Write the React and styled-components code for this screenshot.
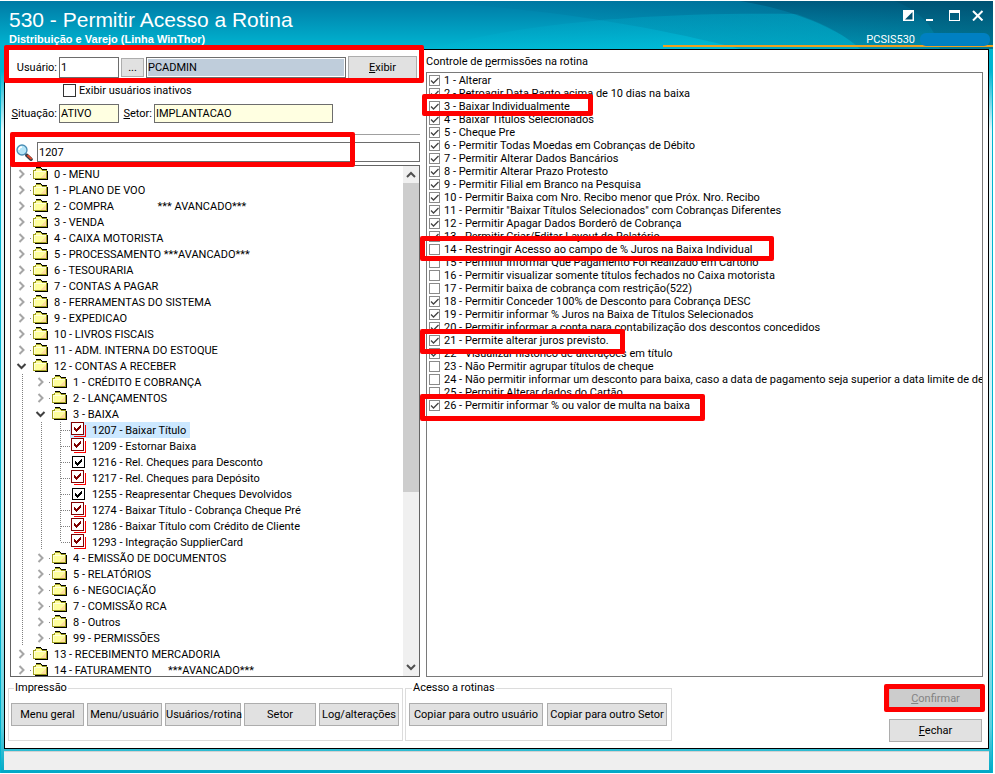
import React, { memo, useState } from 'react';
import styled, { createGlobalStyle, css } from 'styled-components';

const GlobalStyle = createGlobalStyle`
  * {
    box-sizing: border-box;
  }

  body {
    margin: 0;
    background: #fff;
    color: #000;
    font: 11px/13px Roboto, "Noto Sans", sans-serif;
  }

  button, input {
    font: inherit;
    color: inherit;
  }
`;

const Window = styled.div`
  display: flex;
  flex-direction: column;
  height: 100vh;
  border: solid #fff;
  border-width: 1px 2px 1px 0;
  background: linear-gradient(#00b4d0 70px, #e8f8fb 130px, #c8f0f6 70%, #5fd0de 94%, #00a8c6);
  box-shadow: inset 1px 0 #00b4d0, inset -1px 0 #00b4d0;
`;

const Header = styled.header`
  position: relative;
  display: flex;
  justify-content: space-between;
  flex: none;
  height: 48px;
  padding: 0 3px 0 9px;
  color: #fff;
  background: linear-gradient(#007aa5, #00b7d3);
`;

const Swoosh = styled.svg`
  position: absolute;
  inset: 0;
  width: 100%;
  height: 100%;
`;

const Titles = styled.div`
  position: relative;
  padding-top: 7px;
  font-family: "Liberation Sans", sans-serif;
`;

const Title = styled.h1`
  margin: 0;
  font-size: 21px;
  font-weight: normal;
  line-height: 24px;
`;

const Subtitle = styled.div`
  font-weight: bold;
  line-height: 14px;
`;

const HeaderSide = styled.div`
  position: relative;
  display: flex;
  flex-direction: column;
  align-items: flex-end;
`;

const WindowButtons = styled.div`
  display: flex;
  gap: 11px;
  height: 32px;
  padding: 8px 6px 0 0;
`;

const WindowButton = styled.button`
  width: 12px;
  height: 12px;
  padding: 0;
  border: 0;
  background: none;

  svg {
    display: block;
  }
`;

const ScreenCode = styled.div`
  display: flex;
  gap: 5px;
  line-height: 13px;
`;

const Blot = styled.span`
  width: 70px;
  height: 13px;
  border-radius: 6px;
  background: #0080c2;
`;

const Panel = styled.main`
  display: flex;
  flex-direction: column;
  flex: 1;
  min-height: 0;
  margin: 0 4px;
  border: 1px solid #000;
  background: #fff;
`;

const Columns = styled.div`
  display: grid;
  grid-template-columns: 410px minmax(0, 1fr);
  gap: 6px;
  flex: 1;
  min-height: 0;
  padding: 6px 5px 0;
`;

const Column = styled.section`
  display: flex;
  flex-direction: column;
  min-height: 0;
`;

const UserRow = styled.div`
  position: relative;
  display: flex;
  align-items: center;
  gap: 2px;
  height: 23px;
`;

const UserLabel = styled.label`
  width: 47px;
  text-align: right;
`;

const TextInput = styled.input`
  width: ${props => props.$width}px;
  height: ${props => props.$short ? 19 : 21}px;
  padding: 0 3px 0 1px;
  border: 1px solid #6d6d6d;
  border-radius: 0;
  background: #fff;
  outline: 0;

  &:read-only {
    background: #ffffe1;
  }
`;

const UserName = styled(TextInput)`
  &:read-only {
    background: #bfcddb;
    box-shadow: inset 0 0 0 1px #fff;
  }
`;

const Button = styled.button`
  position: relative;
  flex: none;
  width: ${props => props.$width}px;
  height: ${props => props.$small ? 19 : 23}px;
  padding: 0;
  border: 1px solid #adadad;
  background: #e1e1e1;
  white-space: nowrap;

  &:disabled {
    border-color: #bfbfbf;
    background: #ccc;
    color: #838383;
  }
`;

const Highlight = styled.span`
  position: absolute;
  z-index: 1;
  top: ${props => props.$top}px;
  left: ${props => props.$left}px;
  width: ${props => props.$width}px;
  height: ${props => props.$height}px;
  border: 5px solid #f00;
  border-radius: 2px;
  pointer-events: none;
`;

const CheckLabel = styled.label`
  display: flex;
  align-items: center;
  gap: 3px;
  height: 13px;
  margin: 5px 0 7px 53px;
`;

const checkSize = css`
  flex: none;
  width: ${props => props.$size}px;
  height: ${props => props.$size}px;
`;

const CheckBox = styled.span`
  display: grid;
  ${checkSize}

  > * {
    grid-area: 1 / 1;
  }

  svg {
    pointer-events: none;
  }
`;

const CheckInput = styled.input`
  ${checkSize}
  appearance: none;
  margin: 0;
  border: 1px solid ${props => props.$dark ? '#333' : '#8a8a8a'};
  background: #fff;

  &:not(:checked) + svg {
    display: none;
  }
`;

const StatusRow = styled.div`
  display: flex;
  align-items: center;
  gap: 2px;
  height: 19px;
`;

const FieldLabel = styled.label`
  width: ${props => props.$width}px;
  text-align: right;
`;

const Divider = styled.hr`
  width: 100%;
  height: 1px;
  margin: 11px 0 7px;
  border: 0;
  background: #a0a0a0;
`;

const SearchRow = styled.div`
  position: relative;
  display: flex;
  align-items: center;
  gap: 4px;
  height: 20px;
  padding-left: 6px;
  margin-bottom: 3px;
`;

const SearchInput = styled(TextInput)`
  flex: 1;
  height: 20px;
`;

const TreeBox = styled.div`
  display: flex;
  flex: 1;
  min-height: 0;
  border: 1px solid #646464;
  overflow: hidden;
`;

const Tree = styled.ul`
  flex: 1;
  margin: 0;
  padding: 0 0 0 2px;
  list-style: none;
`;

const TreeRow = styled.li`
  display: flex;
  height: 16px;
  white-space: pre;
`;

const guideLine = css`
  background-image: repeating-linear-gradient(#808080 0 1px, transparent 1px 2px);
  background-position: 9px 0;
  background-size: 1px 100%;
  background-repeat: no-repeat;
`;

const Guide = styled.span`
  flex: none;
  width: 19px;
  ${guideLine}
`;

const Elbow = styled.span`
  position: relative;
  flex: none;
  width: 19px;
  ${guideLine}
  ${props => props.$last && 'background-size: 1px 8px;'}

  &::after {
    content: "";
    position: absolute;
    top: 8px;
    right: 0;
    width: 9px;
    height: 1px;
    background: repeating-linear-gradient(90deg, #808080 0 1px, transparent 1px 2px);
  }
`;

const Toggle = styled.button`
  flex: none;
  width: 19px;
  padding: 0;
  border: 0;
  background: none;

  svg {
    display: block;
  }
`;

const TreeItem = styled.span`
  display: flex;
  align-items: center;
  gap: 5px;
  padding: 0 4px 0 1px;
  background: ${props => props.$selected ? '#cce8ff' : 'none'};
`;

const ScrollBar = styled.div`
  display: flex;
  flex-direction: column;
  width: 16px;
  background: #f0f0f0;
`;

const ScrollButton = styled.button`
  flex: none;
  height: 17px;
  padding: 0;
  border: 0;
  background: none;
`;

const ScrollTrack = styled.div`
  flex: 1;
`;

const ScrollThumb = styled.div`
  height: 65%;
  background: #cdcdcd;
`;

const ListTitle = styled.h2`
  margin: 0 0 4px;
  font-size: 11px;
  font-weight: normal;
  line-height: 12px;
`;

const PermissionList = styled.ul`
  flex: 1;
  margin: 0;
  padding: 1px 0 0;
  border: 1px solid #7a7a7a;
  list-style: none;
`;

const PermissionRow = styled.li`
  position: relative;
`;

const PermissionLabel = styled.label`
  display: flex;
  align-items: center;
  gap: 4px;
  height: 13px;
  padding-left: 2px;
  overflow: hidden;
  white-space: nowrap;
`;

const Footer = styled.footer`
  display: flex;
  flex: none;
  gap: 2px;
  padding: 4px 6px 6px 3px;
`;

const Group = styled.fieldset`
  display: flex;
  gap: ${props => props.$gap}px;
  min-width: 0;
  height: 60px;
  margin: 0;
  padding: 8px ${props => props.$gap}px 0 ${props => props.$gap - 1}px;
  border: 1px solid #dcdcdc;

  legend {
    margin-left: 3px;
    padding: 0 1px;
    line-height: 14px;
  }
`;

const Actions = styled.div`
  display: flex;
  flex-direction: column;
  gap: 9px;
  margin-left: auto;
  padding-top: 6px;
`;

const StatusBar = styled.div`
  flex: none;
  height: 19px;
  margin: 2px 4px 3px;
  border-top: 1px solid #d2d2d2;
  background: #efefef;
`;

const FOLDERS = [
  { id: 0, text: '0 - MENU' },
  { id: 1, text: '1 - PLANO DE VOO' },
  { id: 2, text: '2 - COMPRA                *** AVANCADO***' },
  { id: 3, text: '3 - VENDA' },
  { id: 4, text: '4 - CAIXA MOTORISTA' },
  { id: 5, text: '5 - PROCESSAMENTO ***AVANCADO***' },
  { id: 6, text: '6 - TESOURARIA' },
  { id: 7, text: '7 - CONTAS A PAGAR' },
  { id: 8, text: '8 - FERRAMENTAS DO SISTEMA' },
  { id: 9, text: '9 - EXPEDICAO' },
  { id: 10, text: '10 - LIVROS FISCAIS' },
  { id: 11, text: '11 - ADM. INTERNA DO ESTOQUE' },
  {
    id: 12,
    text: '12 - CONTAS A RECEBER',
    children: [
      { id: 121, text: '1 - CRÉDITO E COBRANÇA' },
      { id: 122, text: '2 - LANÇAMENTOS' },
      {
        id: 123,
        text: '3 - BAIXA',
        children: [
          { id: 1207, text: '1207 - Baixar Título', leaf: 'multi' },
          { id: 1209, text: '1209 - Estornar Baixa', leaf: 'multi' },
          { id: 1216, text: '1216 - Rel. Cheques para Desconto', leaf: 'single' },
          { id: 1217, text: '1217 - Rel. Cheques para Depósito', leaf: 'multi' },
          { id: 1255, text: '1255 - Reapresentar Cheques Devolvidos', leaf: 'single' },
          { id: 1274, text: '1274 - Baixar Título - Cobrança Cheque Pré', leaf: 'multi' },
          { id: 1286, text: '1286 - Baixar Título com Crédito de Cliente', leaf: 'multi' },
          { id: 1293, text: '1293 - Integração SupplierCard', leaf: 'multi' },
        ],
      },
      { id: 124, text: '4 - EMISSÃO DE DOCUMENTOS' },
      { id: 125, text: '5 - RELATÓRIOS' },
      { id: 126, text: '6 - NEGOCIAÇÃO' },
      { id: 127, text: '7 - COMISSÃO RCA' },
      { id: 128, text: '8 - Outros' },
      { id: 129, text: '99 - PERMISSÕES' },
    ],
  },
  { id: 13, text: '13 - RECEBIMENTO MERCADORIA' },
  { id: 14, text: '14 - FATURAMENTO      ***AVANCADO***' },
];

const PERMISSIONS = [
  ['Alterar', true],
  ['Retroagir Data Pagto acima de 10 dias na baixa', true],
  ['Baixar Individualmente', true, { $top: -6, $left: -5, $width: 171, $height: 22 }],
  ['Baixar Títulos Selecionados', true],
  ['Cheque Pre', true],
  ['Permitir Todas Moedas em Cobranças de Débito', true],
  ['Permitir Alterar Dados Bancários', true],
  ['Permitir Alterar Prazo Protesto', true],
  ['Permitir Filial em Branco na Pesquisa', true],
  ['Permitir Baixa com Nro. Recibo menor que Próx. Nro. Recibo', true],
  ['Permitir "Baixar Títulos Selecionados" com Cobranças Diferentes', true],
  ['Permitir Apagar Dados Borderô de Cobrança', true],
  ['Permitir Criar/Editar Layout do Relatório', true],
  ['Restringir Acesso ao campo de % Juros na Baixa Individual', false, { $top: -7, $left: -7, $width: 354, $height: 25 }],
  ['Permitir Informar Que Pagamento Foi Realizado em Cartório', false],
  ['Permitir visualizar somente títulos fechados no Caixa motorista', false],
  ['Permitir baixa de cobrança com restrição(522)', false],
  ['Permitir Conceder 100% de Desconto para Cobrança DESC', true],
  ['Permitir informar % Juros na Baixa de Títulos Selecionados', true],
  ['Permitir informar a conta para contabilização dos descontos concedidos', true],
  ['Permite alterar juros previsto.', true, { $top: -5, $left: -7, $width: 205, $height: 25 }],
  ['Visualizar histórico de alterações em título', true],
  ['Não Permitir agrupar títulos de cheque', false],
  ['Não permitir informar um desconto para baixa, caso a data de pagamento seja superior a data limite de desconto', false],
  ['Permitir Alterar dados do Cartão', false],
  ['Permitir informar % ou valor de multa na baixa', true, { $top: -5, $left: -7, $width: 285, $height: 27 }],
];

const FolderIcon = () => (
  <svg width="16" height="16" viewBox="0 0 16 16" shapeRendering="crispEdges">
    <path d="M14 5h1v9H2v-1h12z" fill="#000" />
    <path d="M0 4h2V3h1V2h5v1h1v1h5v9H0z" fill="#a0a020" />
    <path d="M1 5h2V3h5v1h1v1h4v7H1z" fill="#ffff9c" />
    <path d="M7 12l6-6v6z" fill="#ffdf9c" />
    <path d="M1 5h12v1H2v6H1z" fill="#ffffe0" />
    <path d="M3 1h5v1H3zM8 2h1v1H8zM9 3h5v1H9z" fill="#000" />
  </svg>
);

const LeafIcon = ({ multi }) => (
  <svg width="16" height="16" viewBox="0 0 16 16" shapeRendering="crispEdges">
    {multi && <path d="M3 14.500H14.500V3" fill="none" stroke="#f00" />}
    <rect x={multi ? 0.5 : 1.5} y={multi ? 0.5 : 2.5} width="12" height={multi ? 12 : 11} fill="#fff" stroke={multi ? '#800000' : '#000'} />
    <path
      d="M3 5h1v1h1v1h1V6h1V5h1V4h1V3h1v3H9v1H8v1H7v1H6v1H5V9H4V8H3z"
      fill={multi ? '#800000' : '#000'}
      transform={multi ? undefined : 'translate(1 2)'}
    />
  </svg>
);

const ArrowIcon = ({ open }) => (
  <svg width="19" height="16" viewBox="0 0 19 16" fill="none" strokeWidth="2">
    {open
      ? <path d="M4.500 6l4 4 4-4" stroke="#404040" />
      : <path d="M6.500 4l4 4-4 4" stroke="#a6a6a6" />}
    {!open && <path d="M17 8.500h1" stroke="#808080" strokeWidth="1" />}
  </svg>
);

const ScrollArrow = ({ down }) => (
  <svg width="16" height="17" viewBox="0 0 16 17" fill="none" stroke="#505050" strokeWidth="2">
    <path d={down ? 'M4 6l4 4 4-4' : 'M4 11l4-4 4 4'} />
  </svg>
);

const SearchIcon = () => (
  <svg width="17" height="17" viewBox="0 0 17 17">
    <path d="M9.5 10l2 2" stroke="#555" strokeWidth="2" />
    <path d="M11 11.5l4 3.7" stroke="#3c3c46" strokeWidth="3.6" strokeLinecap="round" />
    <path d="M12 11.8l3 2.600" stroke="#e0492c" strokeWidth="2" strokeLinecap="round" />
    <circle cx="6" cy="6" r="5" fill="#b5e5f8" stroke="#4a8db5" strokeWidth="1.3" />
    <path d="M3 6a3 3 0 0 1 3-3" fill="none" stroke="#fff" strokeWidth="1.5" />
  </svg>
);

const Check = ({ dark, size, ...rest }) => (
  <CheckBox $size={size}>
    <CheckInput type="checkbox" $size={size} $dark={dark} {...rest} />
    <svg width={size} height={size} viewBox="0 0 11 11" fill="none" stroke="#444" strokeWidth="1.3">
      <path d="M2 5.5l2.500 2.500L9.500 3" />
    </svg>
  </CheckBox>
);

const HeaderArt = () => (
  <Swoosh viewBox="0 0 993 48" preserveAspectRatio="none">
    <defs>
      <linearGradient id="deep" x1="0" x2="1">
        <stop offset="0" stopColor="#006a94" stopOpacity="0" />
        <stop offset="0.5" stopColor="#006488" stopOpacity="0.5" />
        <stop offset="1" stopColor="#004a68" stopOpacity="0.75" />
      </linearGradient>
      <linearGradient id="shine" x1="0" x2="1">
        <stop offset="0" stopColor="#00c8e2" stopOpacity="0.05" />
        <stop offset="1" stopColor="#00c8e2" stopOpacity="0.35" />
      </linearGradient>
      <linearGradient id="edge" x1="0" x2="0" y1="0" y2="1">
        <stop offset="0" stopColor="#00486a" stopOpacity="0.9" />
        <stop offset="1" stopColor="#00809f" stopOpacity="0.2" />
      </linearGradient>
    </defs>
    <path d="M400 0C520 4 640 22 740 48H993V0z" fill="url(#deep)" opacity="0.6" />
    <path d="M430 48C520 22 650 11 797 13C825 23 848 36 860 48z" fill="url(#shine)" />
    <path d="M740 0C790 8 835 26 862 48H993V0z" fill="url(#edge)" opacity="0.6" />
    <path d="M895 0C920 10 935 26 940 48H993V0z" fill="#003f5c" opacity="0.2" />
    <path d="M663 45H993" stroke="#eea020" strokeWidth="2" />
  </Swoosh>
);

const TreeNodes = ({ nodes, depth = 0, selected, onSelect }) => nodes.map((node, i) => (
  <React.Fragment key={node.id}>
    <TreeRow role="treeitem" aria-level={depth + 1} aria-selected={selected === node.id} onClick={() => onSelect(node.id)}>
      {Array.from({ length: depth }, (_, level) => <Guide key={level} />)}
      {node.leaf
        ? <Elbow $last={i === nodes.length - 1} />
        : <Toggle type="button" aria-label={node.text}><ArrowIcon open={!!node.children} /></Toggle>}
      <TreeItem $selected={selected === node.id}>
        {node.leaf ? <LeafIcon multi={node.leaf === 'multi'} /> : <FolderIcon />}
        {node.text}
      </TreeItem>
    </TreeRow>
    {node.children && <TreeNodes nodes={node.children} depth={depth + 1} selected={selected} onSelect={onSelect} />}
  </React.Fragment>
));

const TitleBar = () => (
  <Header>
    <HeaderArt />
    <Titles>
      <Title>530 - Permitir Acesso a Rotina</Title>
      <Subtitle>Distribuição e Varejo (Linha WinThor)</Subtitle>
    </Titles>
    <HeaderSide>
      <WindowButtons>
        <WindowButton aria-label="Alternar">
          <svg width="12" height="12"><path d="M0 1h11v11H0z" fill="#fff" /><path d="M2 10.500L9.500 3v7.500z" fill="#00506f" /></svg>
        </WindowButton>
        <WindowButton aria-label="Minimizar">
          <svg width="12" height="12"><path d="M0 10h7v2H0z" fill="#fff" /></svg>
        </WindowButton>
        <WindowButton aria-label="Maximizar">
          <svg width="12" height="12" fill="#fff"><path d="M0 1h11v11H0zM1 4v7h9V4z" fillRule="evenodd" /></svg>
        </WindowButton>
        <WindowButton aria-label="Fechar janela">
          <svg width="12" height="12"><path d="M1 2l9.500 9.500M10.500 2L1 11.500" stroke="#fff" strokeWidth="2" /></svg>
        </WindowButton>
      </WindowButtons>
      <ScreenCode>PCSIS530 <Blot /></ScreenCode>
    </HeaderSide>
  </Header>
);

const UserColumn = () => {
  const [selected, setSelected] = useState(1207);

  return (
    <Column>
      <UserRow>
        <UserLabel htmlFor="user">Usuário:</UserLabel>
        <TextInput id="user" $width={60} defaultValue="1" />
        <Button $width={23} $small>...</Button>
        <UserName aria-label="Nome do usuário" $width={200} readOnly value="PCADMIN" />
        <Button $width={69}><u>E</u>xibir</Button>
        <Highlight $top={-11} $left={-6} $width={420} $height={38} />
      </UserRow>
      <CheckLabel>
        <Check size={13} dark />
        Exibir usuários inativos
      </CheckLabel>
      <StatusRow>
        <FieldLabel htmlFor="status" $width={47}><u>S</u>ituação:</FieldLabel>
        <TextInput id="status" $width={60} $short readOnly value="ATIVO" />
        <FieldLabel htmlFor="sector" $width={31}><u>S</u>etor:</FieldLabel>
        <TextInput id="sector" $width={179} $short readOnly value="IMPLANTACAO" />
      </StatusRow>
      <Divider />
      <SearchRow>
        <SearchIcon />
        <SearchInput aria-label="Pesquisar rotina" defaultValue="1207" />
        <Highlight $top={-10} $left={0} $width={345} $height={35} />
      </SearchRow>
      <TreeBox>
        <Tree role="tree">
          <TreeNodes nodes={FOLDERS} selected={selected} onSelect={setSelected} />
        </Tree>
        <ScrollBar>
          <ScrollButton aria-label="Subir"><ScrollArrow /></ScrollButton>
          <ScrollTrack><ScrollThumb /></ScrollTrack>
          <ScrollButton aria-label="Descer"><ScrollArrow down /></ScrollButton>
        </ScrollBar>
      </TreeBox>
    </Column>
  );
};

const PermissionColumn = () => (
  <Column>
    <ListTitle>Controle de <u>p</u>ermissões na rotina</ListTitle>
    <PermissionList>
      {PERMISSIONS.map(([text, checked, mark], i) => (
        <PermissionRow key={text}>
          <PermissionLabel>
            <Check size={11} defaultChecked={checked} />
            {i + 1} - {text}
          </PermissionLabel>
          {mark && <Highlight {...mark} />}
        </PermissionRow>
      ))}
    </PermissionList>
  </Column>
);

const App = () => (
  <>
    <GlobalStyle />
    <Window>
      <TitleBar />
      <Panel>
        <Columns>
          <UserColumn />
          <PermissionColumn />
        </Columns>
        <Footer>
          <Group $gap={3}>
            <legend>Impressão</legend>
            <Button $width={73}>Menu <u>g</u>eral</Button>
            <Button $width={75}>Menu/usuário</Button>
            <Button $width={76}>Usuários/rotina</Button>
            <Button $width={72}>Setor</Button>
            <Button $width={80}>Log/alterações</Button>
          </Group>
          <Group $gap={4}>
            <legend>Acesso a rotinas</legend>
            <Button $width={134}>Copiar para outro usuário</Button>
            <Button $width={120}>Copiar para outro Setor</Button>
          </Group>
          <Actions>
            <Button $width={93} disabled>
              <u>C</u>onfirmar
              <Highlight $top={-4} $left={-6} $width={101} $height={28} />
            </Button>
            <Button $width={93}><u>F</u>echar</Button>
          </Actions>
        </Footer>
      </Panel>
      <StatusBar />
    </Window>
  </>
);

export default memo(App);
